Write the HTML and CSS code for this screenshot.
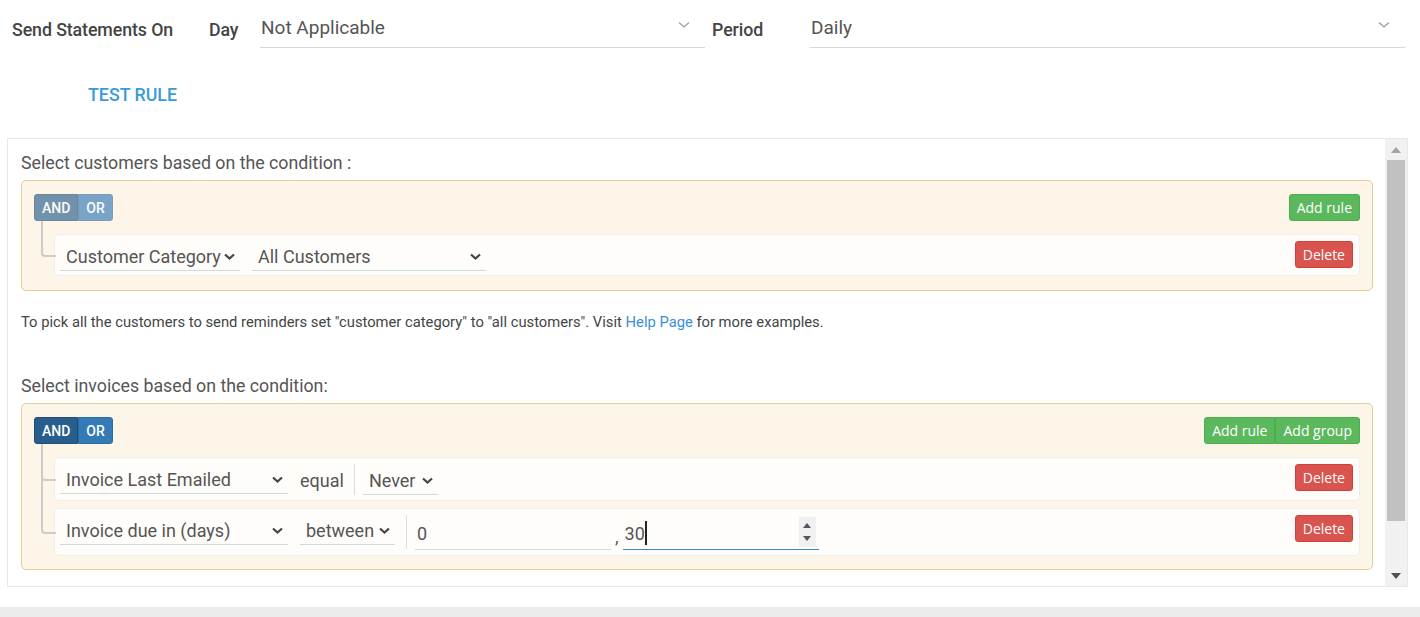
FILE: index.html
```html
<!DOCTYPE html>
<html>
<head>
<meta charset="utf-8">
<link rel="stylesheet" href="styles.css">
</head>
<body>
<div class="page">
  <div class="top-row">
    <div class="top-label">Send Statements On</div>
    <div class="top-label">Day</div>
    <div class="top-select"><span>Not Applicable</span><svg class="thin-chev" width="12" height="8" viewBox="0 0 12 8"><polyline points="1,1.5 6,6 11,1.5" fill="none" stroke="#9a9a9a" stroke-width="1.2"/></svg></div>
    <div></div>
    <div class="top-label">Period</div>
    <div class="top-select"><span>Daily</span><svg class="thin-chev" width="12" height="8" viewBox="0 0 12 8"><polyline points="1,1.5 6,6 11,1.5" fill="none" stroke="#9a9a9a" stroke-width="1.2"/></svg></div>
  </div>

  <div class="actions"><a class="test-rule">TEST RULE</a></div>

  <div class="panel">
    <div class="panel-body">
      <div class="section-title">Select customers based on the condition :</div>
      <div class="group first">
        <div class="group-header">
          <div class="btn-group conj disabled"><span class="btn conj-btn active">AND</span><span class="btn conj-btn">OR</span></div>
          <div class="btn-group"><span class="btn btn-success">Add rule</span></div>
        </div>
        <div class="rules">
          <div class="rule last">
            <div class="sel w180"><span>Customer Category</span><svg width="11" height="7" viewBox="0 0 11 7"><polyline points="1,1.5 5.5,5.5 10,1.5" fill="none" stroke="#444" stroke-width="2.2"/></svg></div>
            <div class="sel w234"><span>All Customers</span><svg width="11" height="7" viewBox="0 0 11 7"><polyline points="1,1.5 5.5,5.5 10,1.5" fill="none" stroke="#444" stroke-width="2.2"/></svg></div>
            <span class="btn btn-danger">Delete</span>
          </div>
        </div>
      </div>

      <p class="hint">To pick all the customers to send reminders set "customer category" to "all customers". Visit <a class="link">Help Page</a> for more examples.</p>

      <div class="section-title second">Select invoices based on the condition:</div>
      <div class="group">
        <div class="group-header">
          <div class="btn-group conj"><span class="btn conj-btn active">AND</span><span class="btn conj-btn">OR</span></div>
          <div class="btn-group"><span class="btn btn-success">Add rule</span><span class="btn btn-success">Add group</span></div>
        </div>
        <div class="rules">
          <div class="rule mid">
            <div class="sel w228"><span>Invoice Last Emailed</span><svg width="11" height="7" viewBox="0 0 11 7"><polyline points="1,1.5 5.5,5.5 10,1.5" fill="none" stroke="#444" stroke-width="2.2"/></svg></div>
            <div class="operator">equal</div>
            <div class="value">
              <div class="sel w75"><span>Never</span><svg width="11" height="7" viewBox="0 0 11 7"><polyline points="1,1.5 5.5,5.5 10,1.5" fill="none" stroke="#444" stroke-width="2.2"/></svg></div>
            </div>
            <span class="btn btn-danger">Delete</span>
          </div>
          <div class="rule last tall">
            <div class="sel w228"><span>Invoice due in (days)</span><svg width="11" height="7" viewBox="0 0 11 7"><polyline points="1,1.5 5.5,5.5 10,1.5" fill="none" stroke="#444" stroke-width="2.2"/></svg></div>
            <div class="sel w95 op-sel"><span>between</span><svg width="11" height="7" viewBox="0 0 11 7"><polyline points="1,1.5 5.5,5.5 10,1.5" fill="none" stroke="#444" stroke-width="2.2"/></svg></div>
            <div class="value">
              <div class="num"><span>0</span></div>
              <span class="comma">,</span>
              <div class="num focused"><span>30</span><span class="caret"></span>
                <span class="spinner"><svg width="8" height="20" viewBox="0 0 8 20"><polygon points="0,6 8,6 4,1" fill="#555"/><polygon points="0,14 8,14 4,19" fill="#555"/></svg></span>
              </div>
            </div>
            <span class="btn btn-danger">Delete</span>
          </div>
        </div>
      </div>
    </div>
    <div class="scrollbar">
      <span class="sb-arrow"><svg width="10" height="6" viewBox="0 0 10 6"><polygon points="0,6 10,6 5,0" fill="#a3a3a3"/></svg></span>
      <div class="sb-track"><div class="sb-thumb"></div></div>
      <span class="sb-arrow"><svg width="10" height="6" viewBox="0 0 10 6"><polygon points="0,0 10,0 5,6" fill="#505050"/></svg></span>
    </div>
  </div>
</div>
</body>
</html>
```

FILE: styles.css
```css
* { box-sizing: border-box; }
html, body { margin: 0; padding: 0; }
body {
  font-family: Roboto, "Liberation Sans", sans-serif;
  background: #ececec;
  color: #555;
}
.page {
  background: #fff;
  height: 607px;
  box-shadow: 0 2px 6px rgba(0,0,0,0.12);
  overflow: hidden;
}
.top-row {
  display: grid;
  grid-template-columns: 197px 51px 445px 7px 98px 595px;
  padding: 8px 0 0 12px;
}
.top-label {
  height: 40px;
  display: flex;
  align-items: center;
  font-size: 17.8px;
  font-weight: 500;
  color: #444;
  padding-top: 2px;
  letter-spacing: -0.1px;
}
.top-select {
  height: 40px;
  display: flex;
  align-items: center;
  justify-content: space-between;
  border-bottom: 1px solid #d3dada;
  font-size: 19px;
  color: #555;
  padding: 0 15px 1px 1px;
}
.thin-chev { margin-top: -4px; }
.actions {
  margin-top: 36px;
  padding-left: 88px;
  height: 21px;
}
.test-rule {
  font-size: 17.8px;
  font-weight: 500;
  line-height: 21px;
  color: #3b9ad9;
}
.panel {
  margin: 33px 0 0 7px;
  width: 1401px;
  height: 449px;
  border: 1px solid #e8e8e8;
  display: flex;
}
.panel-body {
  flex: 1;
  padding: 12px 12px 0 13px;
  overflow: hidden;
}
.section-title {
  font-size: 17.75px;
  line-height: 24px;
  color: #555;
  margin-bottom: 5px;
}
.section-title.second { margin-top: 42px; }
.group {
  background: #fcf5e8;
  border: 1px solid #e2cd98;
  border-radius: 5px;
  padding: 13px 12px 13px 12px;
}
.group.first { padding-bottom: 14px; }
.group-header {
  display: flex;
  justify-content: space-between;
  align-items: center;
}
.btn-group { display: flex; }
.btn {
  display: inline-flex;
  align-items: center;
  height: 27px;
  padding: 0 7px;
  font-family: "Open Sans", "Noto Sans", sans-serif;
  font-size: 14px;
  color: #fff;
  border: 1px solid transparent;
  border-radius: 3px;
}
.btn-group .btn + .btn { border-top-left-radius: 0; border-bottom-left-radius: 0; }
.btn-group .btn:not(:last-child) { border-top-right-radius: 0; border-bottom-right-radius: 0; }
.btn-success { background: #5cb85c; border-color: #4cae4c; padding: 0 7px; }
.btn-danger { background: #d9534f; border-color: #d43f3a; }
.conj-btn {
  font-family: Roboto, "Liberation Sans", sans-serif;
  font-weight: 500;
  height: 27px;
  background: #337ab7;
  border-color: #2e6da4;
  padding: 0 7px;
}
.conj-btn.active { background: #285e8e; border-color: #204d74; }
.conj.disabled { opacity: 0.65; }
.rules {
  padding-left: 20px;
  margin-top: 13px;
  display: flex;
  flex-direction: column;
  gap: 7px;
}
.rule {
  position: relative;
  display: flex;
  align-items: flex-start;
  background: #fffdfa;
  border: 1px solid #efefef;
  border-radius: 5px;
  padding: 5px 6px 4px 5px;
}
.rule.mid { padding-bottom: 5px; }
.rule::before {
  content: "";
  position: absolute;
  left: -14px;
  top: -14px;
  width: 13px;
  height: calc(50% + 14px);
  border-left: 2px solid #cccccc;
  border-bottom: 2px solid #cccccc;
  border-radius: 0 0 0 4px;
}
.rule:not(.last)::after {
  content: "";
  position: absolute;
  left: -14px;
  top: 50%;
  height: calc(50% + 8px);
  border-left: 2px solid #cccccc;
}
.rule .btn-danger { margin-left: auto; margin-top: 1px; }
.sel {
  height: 31px;
  display: flex;
  align-items: center;
  justify-content: space-between;
  border-bottom: 1px solid #cfdcdc;
  font-size: 18px;
  color: #555;
  padding: 3px 5px 0 6px;
  margin-right: 12px;
}
.sel svg { margin-top: -1px; }
.w180 { width: 180px; }
.w234 { width: 234px; }
.w228 { width: 228px; }
.w75 { width: 75px; padding-left: 6px; }
.w95 { width: 95px; }
.operator {
  height: 31px;
  display: flex;
  align-items: center;
  font-size: 18px;
  padding-top: 3px;
  margin-right: 10px;
}
.op-sel { margin-right: 11px; }
.value {
  display: flex;
  align-items: center;
  border-left: 1px solid #dddddd;
  padding-left: 8px;
  margin-top: 1px;
}
.rule.tall { padding-bottom: 6px; }
.rule.tall .value { height: 34px; margin-top: 1px; }
.num {
  position: relative;
  width: 196px;
  height: 35px;
  display: flex;
  align-items: center;
  border-bottom: 1px solid #d5dcdc;
  font-size: 18px;
  color: #555;
  padding: 3px 2px 0;
}
.num.focused { border-bottom-color: #3f88c8; }
.comma { font-size: 18px; margin: 8px 4px 0; }
.caret {
  display: inline-block;
  width: 2px;
  height: 24px;
  background: #222;
  margin-left: 0;
}
.spinner {
  position: absolute;
  right: 3px;
  top: 2px;
  width: 17px;
  height: 30px;
  background: #f0f0f0;
  display: flex;
  align-items: center;
  justify-content: center;
}
.hint {
  margin: 21px 0 0;
  font-size: 14.75px;
  line-height: 20px;
  color: #444;
}
.link { color: #3a8fd6; }
.scrollbar {
  width: 22px;
  background: #f1f1f1;
  display: flex;
  flex-direction: column;
}
.sb-arrow {
  height: 21px;
  display: flex;
  align-items: center;
  justify-content: center;
}
.sb-track { flex: 1; padding: 0 2px; }
.sb-thumb { height: 361px; background: #c1c1c1; }
```
